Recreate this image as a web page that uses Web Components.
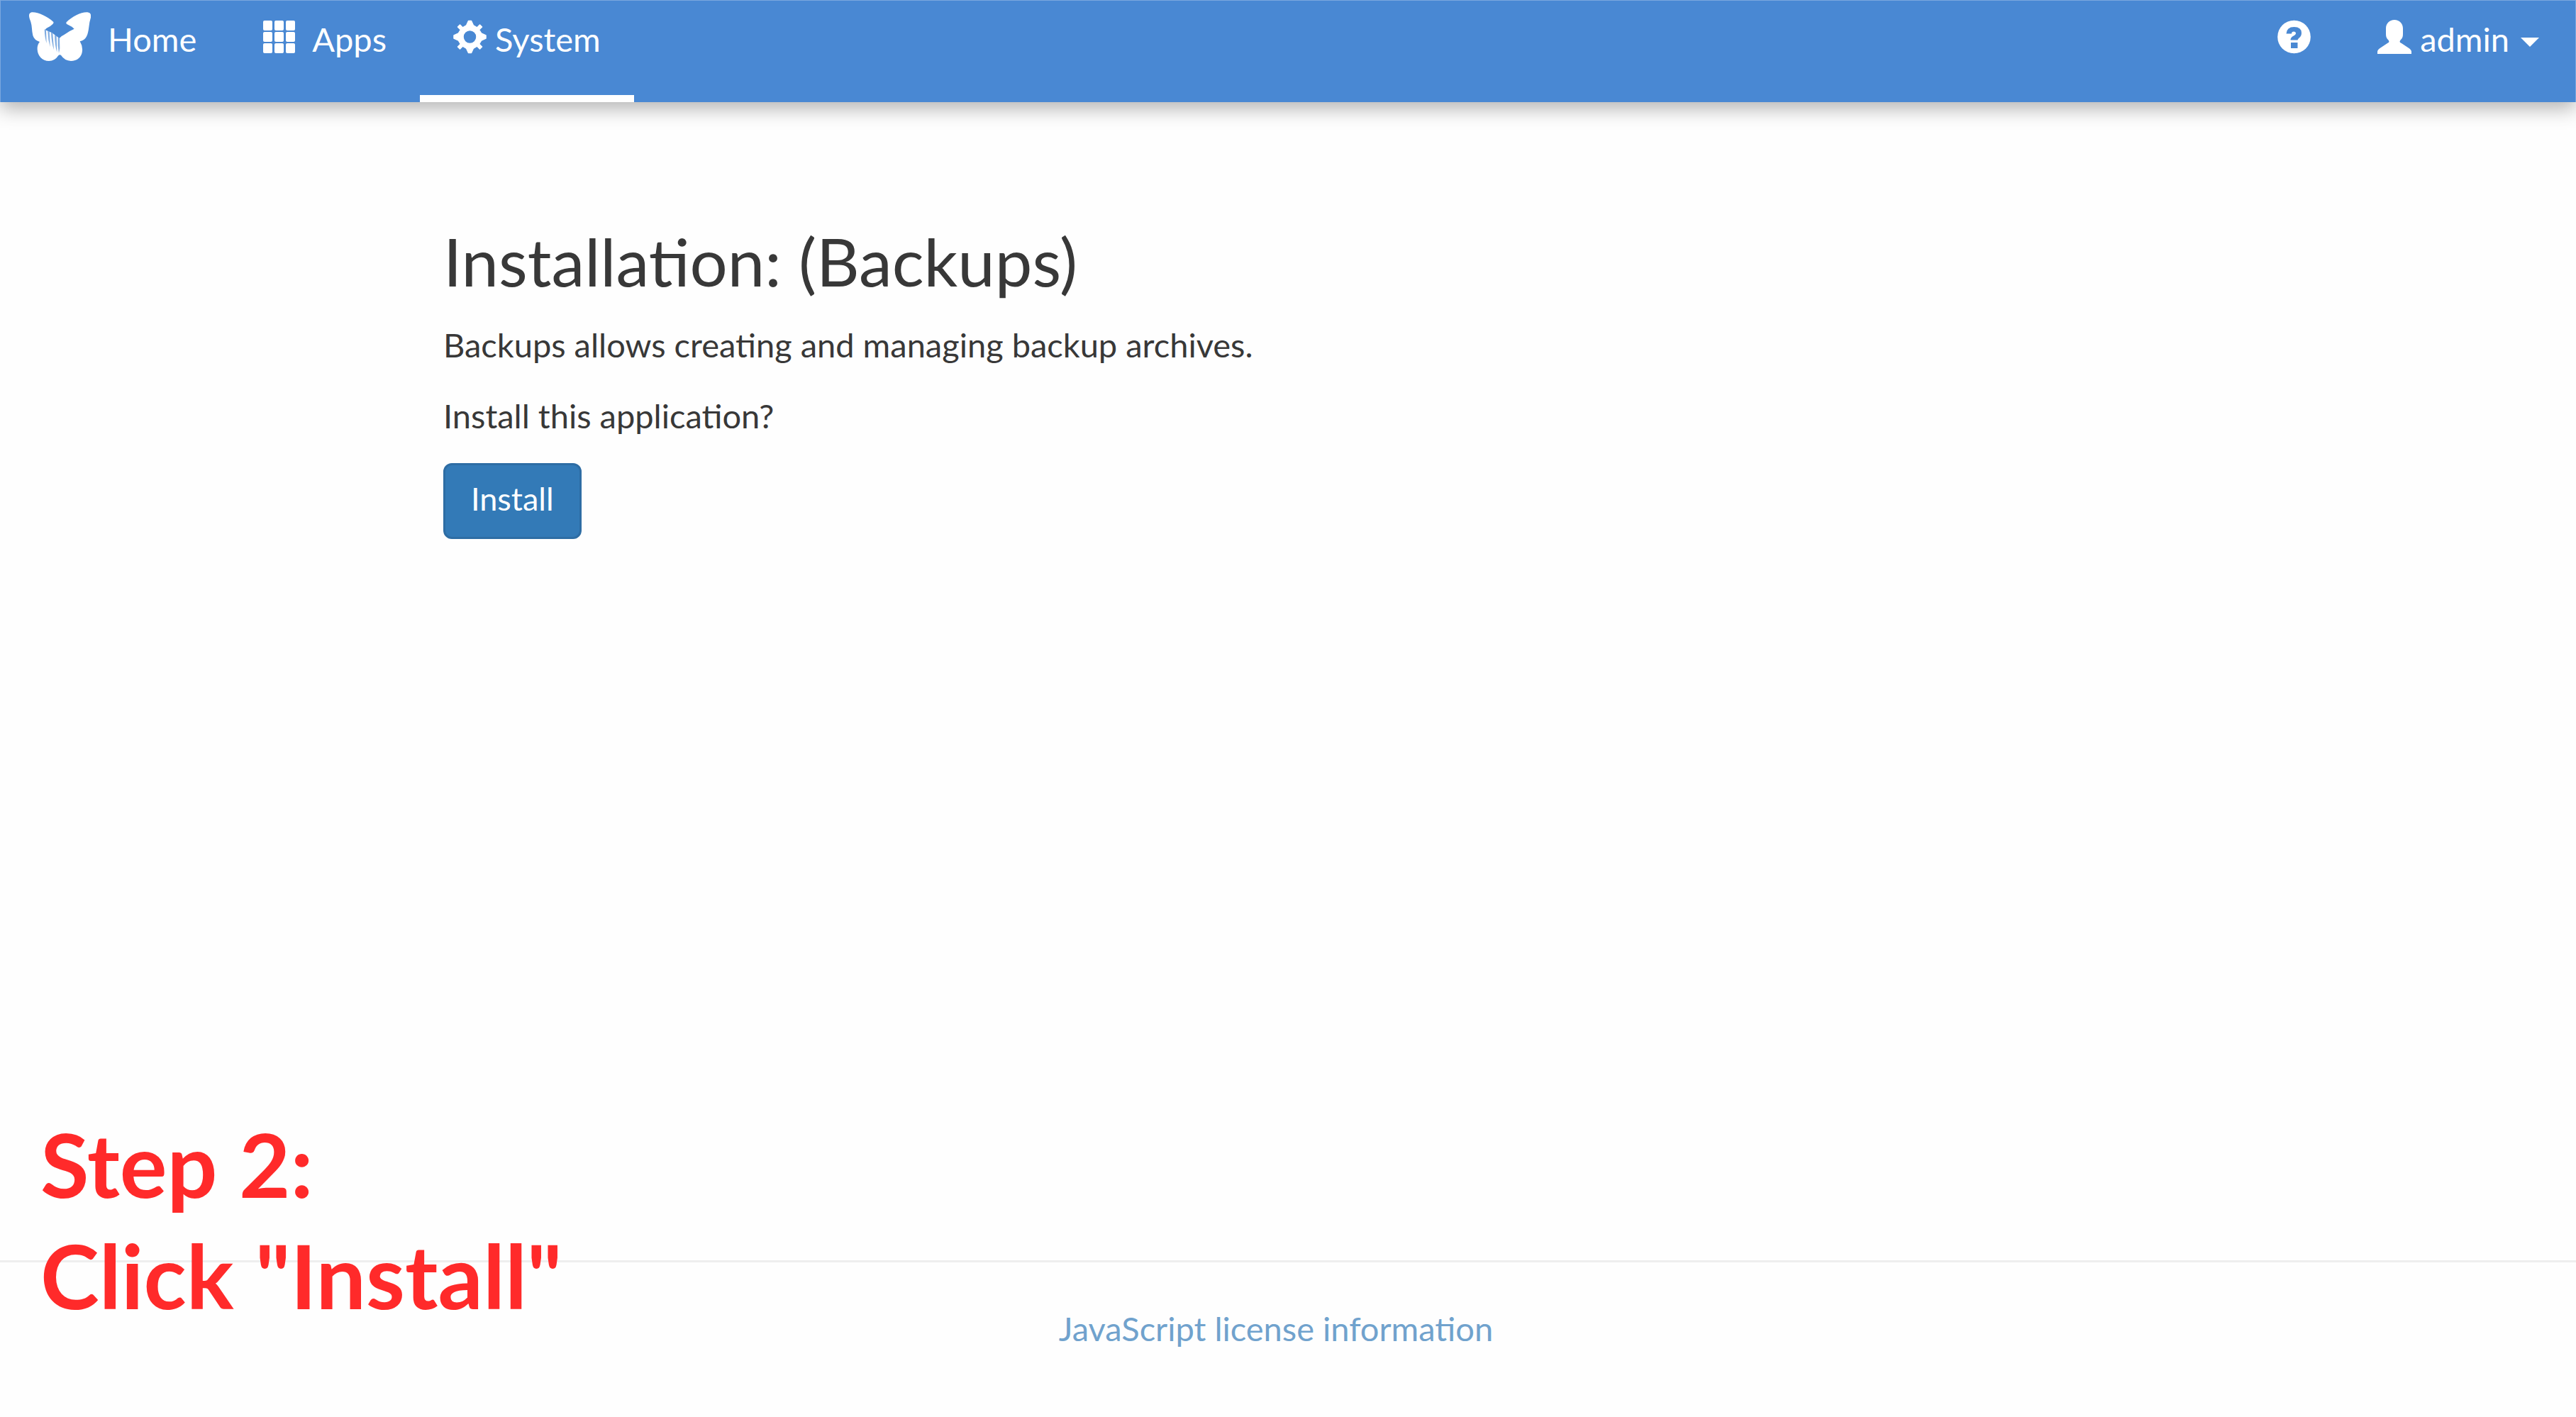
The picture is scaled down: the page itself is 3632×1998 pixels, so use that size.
<!DOCTYPE html>
<html lang="en">
<head>
<meta charset="utf-8">
<title>Installation: (Backups)</title>
<style>
body { margin: 0; font: 400 47px/67px Lato, "Liberation Sans", sans-serif; color: #383838; background: #fefefe; }
</style>
</head>
<body>
<app-shell>
  <top-bar slot="header">
    <nav-item icon="logo" wide>Home</nav-item>
    <nav-item icon="grid" wide>Apps</nav-item>
    <nav-item icon="cog" active>System</nav-item>
    <nav-item slot="end" icon="help" label="Help"></nav-item>
    <user-menu slot="end">admin</user-menu>
  </top-bar>
  <install-page>
    <span slot="title">Installation: (Backups)</span>
    <span slot="description">Backups allows creating and managing backup archives.</span>
    <span slot="question">Install this application?</span>
    <span slot="action">Install</span>
  </install-page>
  <page-footer slot="footer">JavaScript license information</page-footer>
  <step-note slot="note"><span>Step 2:</span><span>Click "Install"</span></step-note>
</app-shell>

<script>
const icons = {
  logo: `<svg width="88" height="70" viewBox="0 0 264 210" aria-hidden="true"><path fill="#fff" d="M14 1C39-1 79 17 106 42Q108 46 103 51Q95 60 77 68L70 75L100 88L131 111Q138 102 150 97Q172 80 194 71L184 62L164 52Q158 48 161 43C187 17 225-1 250 1Q266 3 265 20Q258 40 256 64C252 94 247 119 218 124Q230 144 228 164C226 191 205 207 180 207Q153 206 139 184Q133 178 127 184Q112 207 87 207C59 206 39 185 38 158Q37 138 48 126Q25 119 19 99C14 77 16 58 10 41C3 24-3 5 14 1Z"/><path fill="#4988d3" opacity=".7" d="M68 73L75 78L77 132Q69 107 68 73ZM82 80L89 83L92 148Q83 117 82 80ZM96 86L103 90L108 160Q98 130 96 86ZM111 97L119 101L121 170Q112 142 111 97ZM125 107L132 111L133 154L129 174Q123 142 125 107Z"/></svg>`,
  grid: `<svg width="45" height="46" viewBox="0 0 45 46" aria-hidden="true"><g fill="#fff">${[0, 16, 32].map(y => [0, 16, 32].map(x => `<rect x="${x}" y="${y}" width="13" height="14" rx="2"/>`).join('')).join('')}</g></svg>`,
  cog: `<svg width="47" height="48" viewBox="-23.5 -24 47 48" aria-hidden="true"><path fill="#fff" stroke="#fff" stroke-width="1.500" stroke-linejoin="round" fill-rule="evenodd" d="M-2-22.500H2L5-16L10-13L14-17L17-14L13-10L16-5L22.500-2V2L16 5L13 10L17 14L14 17L10 13L5 16L2 22.500H-2L-5 16L-10 13L-14 17L-17 14L-13 10L-16 5L-22.500 2V-2L-16-5L-13-10L-17-14L-14-17L-10-13L-5-16ZM0-9.500A9.500 9.500 0 1 0 0 9.500A9.500 9.500 0 1 0 0-9.500Z"/></svg>`,
  help: `<svg width="47" height="48" viewBox="0 0 47 48" aria-hidden="true"><circle cx="23.5" cy="24" r="23.3" fill="#fff"/><path d="M12.500 19.500H20Q20 16.500 23 16.500Q26 16.500 26 19Q26 21 22 23Q18.500 25 18.500 28.500H28.500Q28.500 27.500 30 26Q34 23 34 18.500Q34 10 23.500 10Q13 10 12.500 19.500ZM19 32H28.500V40H19Z" fill="#4988d3"/></svg>`,
  user: `<svg width="48" height="48" viewBox="0 0 48 48" aria-hidden="true"><path fill="#fff" d="M24 0C31 0 36 5 36 12V20C36 24 35 26 33 28C31 30 31 32 34 33L43 39Q48 42 48 45V48H0V45Q0 42 5 39L14 33C17 32 17 30 15 28C13 26 12 24 12 20V12C12 5 17 0 24 0Z"/></svg>`,
  caret: `<svg class="caret" width="26" height="13" viewBox="0 0 26 13" aria-hidden="true"><path fill="#fff" d="M0 0H26L13 13Z"/></svg>`
};

const itemStyles = `
  :host { display: flex; }
  a, button { box-sizing: border-box; display: flex; align-items: center; gap: 12px; height: 143px; margin: 0; padding: 21px 47px 46px; border: 0; border-bottom: 10px solid transparent; background: none; color: #fff; font: inherit; line-height: 66px; text-decoration: none; white-space: nowrap; cursor: pointer; }
  svg { display: block; flex: none; margin-bottom: 6px; }
  .caret { margin: 8px 0 0 4px; }`;

function define(name, render) {
  customElements.define(name, class extends HTMLElement {
    constructor() {
      super();
      this.attachShadow({ mode: 'open' });
    }
    connectedCallback() {
      this.shadowRoot.innerHTML = render(this);
    }
  });
}

define('app-shell', () => `
  <style>
    :host { position: relative; display: flex; flex-direction: column; min-height: 100vh; }
    main { flex: 1; }
  </style>
  <slot name="header"></slot><main><slot></slot></main><slot name="footer"></slot><slot name="note"></slot>`);

define('top-bar', () => `
  <style>
    :host { display: block; }
    header { display: flex; justify-content: space-between; background: #4988d3; border: 1px solid #7ba8de; border-bottom: 0; box-shadow: 0 9px 26px rgba(0, 0, 0, .3); }
    nav { display: flex; }
    nav:first-child { margin-left: -8px; }
    nav:last-child { margin-right: 4px; }
  </style>
  <header><nav aria-label="Main"><slot></slot></nav><nav aria-label="Account"><slot name="end"></slot></nav></header>`);

define('nav-item', el => `
  <style>${itemStyles}
    :host([wide]) a { gap: 24px; }
    :host([active]) a { border-bottom-color: #fff; }
  </style>
  <a href="#"${el.hasAttribute('label') ? ` aria-label="${el.getAttribute('label')}"` : ''}>${icons[el.getAttribute('icon')]}${el.hasAttribute('label') ? '' : '<slot></slot>'}</a>`);

define('user-menu', () => `
  <style>${itemStyles}</style>
  <button type="button" aria-haspopup="true">${icons.user}<slot></slot>${icons.caret}</button>`);

define('install-page', () => `
  <style>
    :host { display: block; box-sizing: border-box; width: 100%; max-width: 2382px; margin: 0 auto; padding-top: 172px; }
    h2 { margin: 0 0 34px; font-size: 94px; line-height: 103px; font-weight: 400; }
    p { margin: 0 0 33px; }
    button { display: block; padding: 19px 36px 25px; border: 3px solid #2e6da4; border-radius: 12px; background: #337ab7; color: #fff; font: inherit; font-size: 45px; line-height: 57px; cursor: pointer; }
  </style>
  <h2><slot name="title"></slot></h2>
  <p><slot name="description"></slot></p>
  <p><slot name="question"></slot></p>
  <form><button type="button"><slot name="action"></slot></button></form>`);

define('page-footer', () => `
  <style>
    :host { display: block; }
    footer { padding: 60px 34px 91px 0; border-top: 3px solid #eee; text-align: center; }
    a { color: #70a2cd; text-decoration: none; }
  </style>
  <footer><a href="#"><slot></slot></a></footer>`);

define('step-note', () => `
  <style>
    :host { position: absolute; left: 57px; bottom: 121px; display: flex; flex-direction: column; color: #ff2a2a; font-size: 125px; line-height: 157px; font-weight: 700; }
  </style>
  <slot></slot>`);
</script>
</body>
</html>
